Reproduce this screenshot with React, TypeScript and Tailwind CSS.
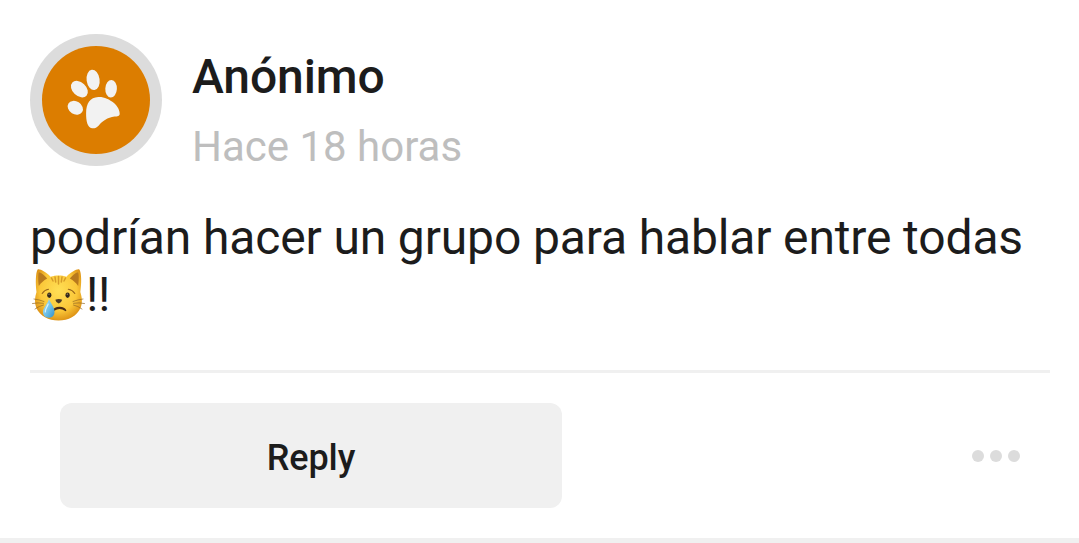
function PawAvatar() {
  return (
    <svg viewBox="30 34 132 132" className="size-[132px] shrink-0" aria-hidden="true">
      <circle cx="96" cy="100" r="66" fill="#dcdcdc" />
      <circle cx="96" cy="100" r="54" fill="#dc7d00" />
      <g fill="#f2f2f2">
        <ellipse cx="93.1" cy="79.9" rx="6.5" ry="10.2" transform="rotate(-8 93.1 79.9)" />
        <ellipse cx="79.4" cy="89.1" rx="9.7" ry="6.8" transform="rotate(43 79.4 89.1)" />
        <ellipse cx="75.3" cy="107.8" rx="8.1" ry="6.4" transform="rotate(32 75.3 107.8)" />
        <ellipse cx="111.1" cy="88.8" rx="5.8" ry="8.8" transform="rotate(3 111.1 88.8)" />
        <path d="M98.3 97C103.5 96.600 109.500 99.300 114 103C117.500 106 119.800 110.500 119.700 114C119.500 116.300 117.500 116.400 114.500 116.500C107.500 117.500 102.500 121 98.800 125.500C96.500 128 94.500 128.600 92 128.300C87.500 127.700 86 121 86.100 113C86.200 103.500 90 97.300 98.300 97Z" />
      </g>
    </svg>
  );
}

function CryingCat() {
  return (
    <svg viewBox="31 266 56 56" className="size-14 shrink-0" role="img" aria-label="😿">
      <defs>
        <radialGradient id="fur" cx="0.5" cy="0.42" r="0.6">
          <stop offset="0" stopColor="#ffdf55" />
          <stop offset="0.65" stopColor="#fbc83a" />
          <stop offset="1" stopColor="#dc9013" />
        </radialGradient>
        <linearGradient id="tear" x1="0" y1="0" x2="1" y2="1">
          <stop offset="0" stopColor="#b8e5f5" />
          <stop offset="0.5" stopColor="#72c3ea" />
          <stop offset="1" stopColor="#3490c7" />
        </linearGradient>
      </defs>
      <path d="M36.500 292C35.300 283 35.700 273 37.500 269.700C39 268.200 46 272 50.500 276.700C55.500 275 62 275 66.500 276.700C71 272 78 268.200 79.500 269.700C81.500 273 81.700 283 80.300 292C82 297 82.700 303 80.500 308C77 316 68.500 320.500 58.500 320.500C48.500 320.500 40 316 36.300 308C34.300 303 34.800 297 36.500 292Z" fill="url(#fur)" />
      <path d="M38.800 286C38 280 38 274 39 272.300C41.500 273 45 275.700 47.200 278.500C43.500 280.500 40.800 283 38.800 286Z" fill="#b8791d" />
      <path d="M78.200 286C79 280 79 274 78 272.300C75.500 273 72 275.700 69.800 278.500C73.500 280.500 76.200 283 78.200 286Z" fill="#b8791d" />
      <g fill="none" stroke="#d79c29" strokeWidth="1.500" strokeLinecap="round">
        <path d="M58.500 276.500V284" />
        <path d="M55 277L55.700 282" />
        <path d="M62 277L61.300 282" />
        <path d="M51.500 278L53 281" />
        <path d="M65.500 278L64 281" />
      </g>
      <g fill="none" stroke="#98651a" strokeWidth="1.100" strokeLinecap="round">
        <path d="M42.200 293.500Q44.500 290 48.500 289.300" />
        <path d="M68.300 289.300Q72.500 290 74.800 293.500" />
      </g>
      <g fill="none" stroke="#946925" strokeWidth="0.700" strokeLinecap="round">
        <path d="M34 299Q39 299.500 44 301.500" />
        <path d="M32.500 303.500Q38 302.300 43.500 303.300" />
        <path d="M35 309Q39 306 43.500 305" />
        <path d="M83 299Q78 299.500 73 301.500" />
        <path d="M84.500 303.500Q79 302.300 73.500 303.300" />
        <path d="M82 309Q78 306 73.500 305" />
      </g>
      <ellipse cx="49.300" cy="295.200" rx="2.100" ry="2.700" fill="#33291c" />
      <ellipse cx="67.600" cy="295.200" rx="2.100" ry="2.700" fill="#33291c" />
      <circle cx="49" cy="294.200" r="0.600" fill="#b39c6c" />
      <circle cx="67.300" cy="294.200" r="0.600" fill="#b39c6c" />
      <path d="M55.300 299.800Q58.700 298.200 62.200 299.800Q61.700 302.500 58.700 303.500Q55.800 302.500 55.300 299.800Z" fill="#4c3b25" />
      <path d="M52.800 310.300Q54 306.700 59.500 306.700Q65 306.700 66.300 310.300Q66.300 311.800 64.800 310.800Q62.500 309 59.500 309Q57 309 54.300 310.700Q52.700 311.600 52.800 310.300Z" fill="#4a2c14" />
      <path d="M49 298.700C50.300 303 54.500 307 54.500 311.700C54.500 315.500 52.300 317.700 48.800 317.700C45 317.700 42.800 315 43 311.500C43.300 307.500 47.900 303.500 49 298.700Z" fill="url(#tear)" />
      <path d="M48.200 304C46.700 308 45 309.500 45.300 312" fill="none" stroke="#d5f1fa" strokeWidth="1.200" strokeLinecap="round" />
    </svg>
  );
}

export default function App() {
  return (
    <main className="flex h-[543px] w-[1079px] flex-col overflow-hidden bg-white font-['Roboto',sans-serif] text-[#1c1c1c]">
      <article className="flex h-[538px] flex-col pt-[34px] pr-[29px] pl-[30px]">
        <header className="flex h-[132px] gap-[30px]">
          <PawAvatar />
          <div className="pt-[15px]">
            <h1 className="text-[48px] leading-[56px] font-medium tracking-[-0.1px]">Anónimo</h1>
            <p className="mt-[17px] text-[42px] leading-[50px] text-[#bebebe]">Hace 18 horas</p>
          </div>
        </header>
        <div className="mt-[44px] h-[160px] text-[48px] leading-[56px] tracking-[-0.14px] whitespace-nowrap">
          <p>podrían hacer un grupo para hablar entre todas</p>
          <p className="flex pl-px">
            <CryingCat />
            <span className="-ml-px pt-px tracking-[-0.5px]">!!</span>
          </p>
        </div>
        <footer className="flex items-start justify-between border-t-[3px] border-[#f0f0f0] px-[30px] pt-[30px]">
          <button className="h-[105px] w-[502px] rounded-xl bg-[#f0f0f0] pt-1 text-[36px] leading-[42px] font-medium tracking-[-0.1px]">Reply</button>
          <button className="mt-[47px] flex gap-1.5" aria-label="More">
            <span className="size-3 rounded-full bg-[#dcdcdc]" />
            <span className="size-3 rounded-full bg-[#dcdcdc]" />
            <span className="size-3 rounded-full bg-[#dcdcdc]" />
          </button>
        </footer>
      </article>
      <div className="h-[5px] bg-[#f0f0f0]" />
    </main>
  );
}
